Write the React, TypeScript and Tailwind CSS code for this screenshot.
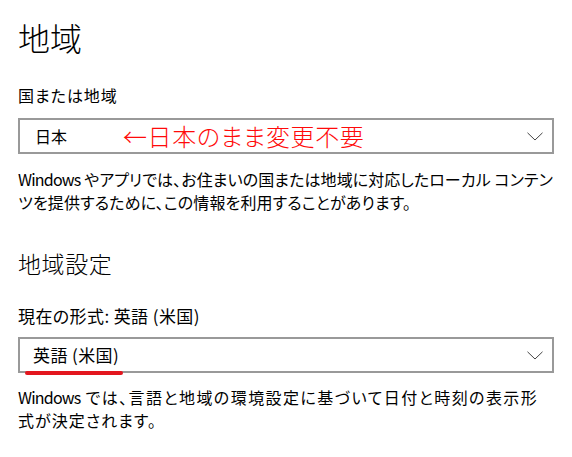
import React from 'react';

const font = "font-['Segoe_UI','Noto_Sans_CJK_JP',sans-serif] [font-feature-settings:'palt']";

// one line of text, spread to the width it has in the screenshot
const Line = ({ className, children }: { className: string; children: React.ReactNode }) => (
  <div className={`whitespace-nowrap text-justify [text-align-last:justify] tracking-[-0.8px] ${className}`}>
    {children}
  </div>
);

const Chevron = () => (
  <svg width="16" height="9" viewBox="0 0 16 9" className="shrink-0">
    <path d="M0.5 0.8 L8 8 L15.5 0.8" fill="none" stroke="#444" strokeWidth="1" />
  </svg>
);

export default function App() {
  return (
    <div className={`w-[572px] h-[457px] bg-white text-black px-[18px] pt-[17px] ${font}`}>
      {/* 地域 */}
      <h1 className="text-[32px] leading-[40px] font-light">地域</h1>

      <Line className="mt-[28px] w-[98px] text-[16px] leading-[20px]">国または地域</Line>
      <div className="relative mt-[13px] h-[36px] border-2 border-[#999] flex items-center justify-between pl-[15px] pr-[9px]">
        <span className="text-[16px]">日本</span>
        <Chevron />
        <Line className="absolute left-[103px] top-[2px] w-[240px] text-[24px] leading-[28px] text-[#ff0a0a] font-light">
          ←日本のまま変更不要
        </Line>
      </div>

      <div className="mt-[14px] text-[16px] leading-[23px]">
        <Line className="w-[534px]">Windows やアプリでは、お住まいの国または地域に対応したローカル コンテン</Line>
        <Line className="w-[392px]">ツを提供するために、この情報を利用することがあります。</Line>
      </div>

      {/* 地域設定 */}
      <Line className="mt-[34px] w-[93px] text-[23px] leading-[30px] font-light">地域設定</Line>

      <div className="mt-[28px] text-[17px] leading-[20px] tracking-[0.4px] whitespace-nowrap">現在の形式: 英語 (米国)</div>
      <div className="relative mt-[11px] h-[36px] border-2 border-[#999] flex items-center justify-between pl-[13px] pr-[9px]">
        <span className="text-[17px] tracking-[0.4px] whitespace-nowrap">英語 (米国)</span>
        <Chevron />
        <span className="absolute left-[5px] bottom-[-4px] w-[98px] h-[4px] rounded-full bg-[#e3161e]" />
      </div>

      <div className="mt-[13px] text-[16px] leading-[23px]">
        <Line className="w-[518px]">Windows では、言語と地域の環境設定に基づいて日付と時刻の表示形</Line>
        <Line className="w-[137px]">式が決定されます。</Line>
      </div>
    </div>
  );
}
